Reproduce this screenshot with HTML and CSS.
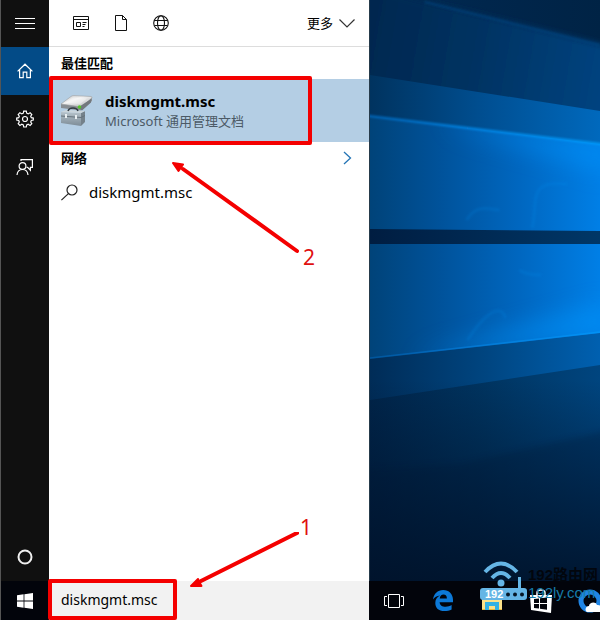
FILE: index.html
```html
<!DOCTYPE html>
<html lang="zh-CN">
<head>
<meta charset="utf-8">
<meta name="viewport" content="width=device-width, initial-scale=1">
<title>diskmgmt.msc</title>
<link rel="stylesheet" href="styles.css">
</head>
<body>
<div class="screen">
  <nav class="rail" aria-label="Cortana">
    <button class="rail-btn" type="button" aria-label="菜单">
      <svg width="20" height="12" viewBox="0 0 20 12"><path d="M0 .5h20M0 5.500h20M0 10.500h20" stroke="#fff" fill="none"/></svg>
    </button>
    <button class="rail-btn rail-btn-active" type="button" aria-label="主页">
      <svg width="16" height="16" viewBox="0 0 16 16" fill="none" stroke="#fff" stroke-width="1.200"><path d="M.6 8.400 8 1.200l7.400 7.200M2.600 6.800v7.800h3.600V9.200h3.600v5.400h3.600V6.800"/></svg>
    </button>
    <button class="rail-btn" type="button" aria-label="设置">
      <svg width="18" height="18" viewBox="-9 -9 18 18" fill="none" stroke="#fff" stroke-width="1.200"><path d="M-1.300-7.800h2.600l.4 2 1.500.7 1.900-1.200 1.700 1.800-1.100 1.700.6 1.500 2 .4v2l-2 .4-.6 1.500 1.100 1.700-1.700 1.800-1.900-1.200-1.500.7-.4 2h-2.600l-.4-2-1.500-.7-1.900 1.200-1.700-1.800 1.100-1.700-.6-1.500-2-.4v-2l2-.4.600-1.500-1.100-1.700 1.700-1.800 1.900 1.200 1.500-.7z"/><circle r="2.500"/></svg>
    </button>
    <button class="rail-btn" type="button" aria-label="反馈">
      <svg width="18" height="18" viewBox="0 0 18 18" fill="none" stroke="#fff" stroke-width="1.200"><path d="M5 3V1.600h11.400v7.800h-2v2.800L11.600 9.400h-1"/><circle cx="6.500" cy="8" r="3.400"/><path d="M1 17c.3-3.500 2.500-5.500 5.500-5.500S11.700 13.500 12 17"/></svg>
    </button>
    <button class="rail-btn rail-btn-last" type="button" aria-label="小娜">
      <svg width="16" height="16" viewBox="0 0 16 16"><circle cx="8" cy="8" r="6.500" fill="none" stroke="#f0f0f0" stroke-width="2"/></svg>
    </button>
  </nav>

  <main class="panel">
    <header class="filters">
      <button class="filter" type="button" aria-label="应用">
        <svg width="16" height="14" viewBox="0 0 16 14" fill="none" stroke="#111"><path d="M.5.500h15v13H.5zM.5 3.500h15M3.500 6.500h4v4h-4zM9.500 6.500h4M9.500 8.500h3M9.500 10.500h2"/></svg>
      </button>
      <button class="filter" type="button" aria-label="文档">
        <svg width="12" height="16" viewBox="0 0 12 16" fill="none" stroke="#111"><path d="M.5.5h7l4 4v11H.5zM7.500.5v4h4"/></svg>
      </button>
      <button class="filter" type="button" aria-label="网页">
        <svg width="16" height="16" viewBox="0 0 16 16" fill="none" stroke="#111" stroke-width="1.100"><circle cx="8" cy="8" r="7.300"/><ellipse cx="8" cy="8" rx="3.500" ry="7.300"/><path d="M1.500 5.500h13M1.500 10.500h13"/></svg>
      </button>
      <button class="more" type="button">更多
        <svg width="16" height="9" viewBox="0 0 16 9" fill="none" stroke="#333" stroke-width="1.200"><path d="M.5.5 8 8 15.500.5"/></svg>
      </button>
    </header>

    <h2 class="heading">最佳匹配</h2>
    <a class="best" href="#">
      <svg class="best-icon" width="34" height="32" viewBox="0 0 34 32">
        <defs>
          <linearGradient id="disk" x1="0" y1="0" x2="1" y2="1"><stop offset="0" stop-color="#c3c5c7"/><stop offset=".4" stop-color="#f1f1f1"/><stop offset="1" stop-color="#b4b6b9"/></linearGradient>
          <linearGradient id="box" x1="0" y1="0" x2="0" y2="1"><stop offset="0" stop-color="#b5c2ca"/><stop offset="1" stop-color="#7d8c97"/></linearGradient>
        </defs>
        <path d="M1 9v4l20 2.500L32 6V2z" fill="#888d92"/>
        <path d="m1 9 10-7.500Q12 .5 14 .6L31 1.500q2 .3.500 1.700L22 12z" fill="url(#disk)" stroke="#9b9da0" stroke-width=".6"/>
        <path d="m5 8 8-5.500 14 1-7 5.500z" fill="#fff" opacity=".35"/>
        <path d="M18 12.500 31 4v3.500l-9 8z" fill="#73787d"/>
        <circle cx="19.500" cy="12" r="1.800" fill="#55c52c"/>
        <path d="m1 17 20 1v13L1 28z" fill="url(#box)"/>
        <path d="m21 18 4-2v11l-4 4z" fill="#74818a"/>
        <path d="m1 17 5-2 19 1-4 2z" fill="#cbd5db"/>
        <path d="M8 16q1-3 5-3t5 3" fill="none" stroke="#343d44" stroke-width="1.500"/>
        <path d="m1 21 20 1.500 4-2" fill="none" stroke="#65727b"/>
        <path d="M6 19v4M16 20v4" stroke="#e9eff2" stroke-width="2"/>
      </svg>
      <span class="best-text">
        <strong class="best-name">diskmgmt.msc</strong>
        <span class="best-kind">Microsoft 通用管理文档</span>
      </span>
      <span class="frame frame-best"></span>
    </a>

    <div class="section">
      <h2 class="heading">网络</h2>
      <svg width="9" height="14" viewBox="0 0 9 14" fill="none" stroke="#2474b5" stroke-width="1.300"><path d="m1 1 6.500 6L1 13"/></svg>
    </div>
    <a class="web" href="#">
      <svg width="17" height="17" viewBox="0 0 17 17" fill="none" stroke="#222" stroke-width="1.200"><circle cx="11" cy="6" r="5"/><path d="m7.400 9.600-7 6.500"/></svg>
      <span>diskmgmt.msc</span>
    </a>

    <div class="note note-two">
      <svg width="140" height="100" viewBox="0 0 140 100"><path d="m11 8 114 82" stroke="#f40000" stroke-width="4" stroke-linecap="round"/><path d="m1 2 10 1.500-2 3-2.500 3.500z" fill="#f40000" stroke="#f40000" stroke-width="2" stroke-linejoin="round"/></svg>
      <span class="digit">2</span>
    </div>
    <div class="note note-one">
      <svg width="112" height="60" viewBox="0 0 112 60"><path d="M12 49 108 1" stroke="#f40000" stroke-width="4" stroke-linecap="round"/><path d="m2 54 7-7 1.500 3.500 2 3.500z" fill="#f40000" stroke="#f40000" stroke-width="2" stroke-linejoin="round"/></svg>
      <span class="digit">1</span>
    </div>
  </main>

  <div class="desktop">
    <svg class="wallpaper" viewBox="0 0 231 581" preserveAspectRatio="none" aria-hidden="true">
      <defs>
        <linearGradient id="sky" x1="0" y1="0" x2="1" y2=".1"><stop offset="0" stop-color="#002c55"/><stop offset=".5" stop-color="#00264c"/><stop offset="1" stop-color="#002345"/></linearGradient>
        <linearGradient id="ray" x1="0" y1="0" x2="1" y2=".1"><stop offset="0" stop-color="#00254b"/><stop offset=".5" stop-color="#003261"/><stop offset="1" stop-color="#00437f"/></linearGradient>
        <linearGradient id="glow" x1="0" y1="0" x2="1" y2="0"><stop offset="0" stop-color="#00335f"/><stop offset=".5" stop-color="#004f92"/><stop offset="1" stop-color="#0069bd"/></linearGradient>
        <linearGradient id="pane" x1="0" y1="0" x2="1" y2="0"><stop offset="0" stop-color="#004379"/><stop offset=".3" stop-color="#00529a"/><stop offset=".65" stop-color="#0067c0"/><stop offset="1" stop-color="#007fe6"/></linearGradient>
        <linearGradient id="edge" x1="0" y1="0" x2="1" y2="0"><stop offset="0" stop-color="#0067bd"/><stop offset=".4" stop-color="#0788e9"/><stop offset="1" stop-color="#05a0ff"/></linearGradient>
        <linearGradient id="bar" x1="0" y1="0" x2="1" y2="0"><stop offset="0" stop-color="#001d41"/><stop offset="1" stop-color="#003767"/></linearGradient>
        <linearGradient id="low" x1="0" y1="0" x2="1" y2="0"><stop offset="0" stop-color="#002c57"/><stop offset=".5" stop-color="#004580"/><stop offset="1" stop-color="#0060b0"/></linearGradient>
        <linearGradient id="floor" x1="0" y1="0" x2="1" y2="0"><stop offset="0" stop-color="#002449"/><stop offset=".5" stop-color="#003460"/><stop offset="1" stop-color="#00457f"/></linearGradient>
        <linearGradient id="shade" x1="0" y1="0" x2="0" y2="1"><stop offset="0" stop-color="#001128" stop-opacity="0"/><stop offset="1" stop-color="#001128" stop-opacity=".85"/></linearGradient>
        <filter id="soft" x="-20%" y="-20%" width="140%" height="140%"><feGaussianBlur stdDeviation="1"/></filter>
        <filter id="wide" x="-20%" y="-20%" width="140%" height="140%"><feGaussianBlur stdDeviation="3"/></filter>
        <filter id="haze" x="-50%" y="-100%" width="200%" height="300%"><feGaussianBlur stdDeviation="12"/></filter>
        <clipPath id="window"><path d="M0 116 231 144V333L0 359z"/></clipPath>
      </defs>
      <path fill="url(#sky)" d="M0 0h231v581H0z"/>
      <path fill="url(#ray)" d="M-20-18 42-2l205 50v90H-20z" filter="url(#wide)"/>
      <path d="m55 2 176 43" stroke="#00569c" stroke-opacity=".4" stroke-width="2" filter="url(#soft)"/>
      <path fill="url(#glow)" d="M0 75 231 111v45H0z"/>
      <path fill="url(#floor)" d="M0 325h231v256H0z"/>
      <path fill="url(#low)" d="M0 325h231v40L0 400z"/>
      <path fill="url(#pane)" d="M0 116 231 144V333L0 359z"/>
      <g clip-path="url(#window)">
        <path d="M70 123 240 144v28z" fill="#0096ff" opacity=".55" filter="url(#haze)"/>
        <path d="m40 358 200-26v-28z" fill="#0098ff" opacity=".6" filter="url(#haze)"/>
        <path d="M163 228c4-18 0-35 10-41 8-5 15-3 25-3M97 220c10-16 21-11 33-10M136 318c-4-15-20-6-38 22M150 270c8 6 16 4 22 5" fill="none" stroke="#1593f0" stroke-opacity=".16" stroke-width="3" filter="url(#soft)"/>
      </g>
      <path d="m-5 115.400 241 29.200" stroke="url(#edge)" stroke-width="2" filter="url(#soft)"/>
      <path d="m0 358 231-26" stroke="url(#edge)" stroke-width="1.500" opacity=".5"/>
      <path fill="url(#bar)" d="m0 229 231 2v13H0z"/>
      <path d="m90 464 151-34v170H-10V470z" fill="#001c3c" opacity=".3" filter="url(#wide)"/>
      <path fill="url(#shade)" d="M0 380h231v201H0z"/>
    </svg>
  </div>

  <footer class="taskbar">
    <button class="start" type="button" aria-label="开始">
      <svg width="16" height="16" viewBox="0 0 16 16" fill="#fff"><path d="m0 2.200 6.600-.9v6.200H0zM7.400 1.200 16 0v7.500H7.400zM0 8.500h6.600v6.200L0 13.800zM7.400 8.500H16V16l-8.600-1.200z"/></svg>
    </button>
    <div class="search">
      <input class="search-input" type="text" value="diskmgmt.msc" aria-label="搜索" spellcheck="false">
      <span class="frame frame-search"></span>
    </div>
    <div class="apps">
      <button class="app" type="button" aria-label="任务视图">
        <svg width="20" height="14" viewBox="0 0 20 14" fill="none" stroke="#fff"><path d="M4.500.5h11v13h-11zM3 2.500H.5v9H3M17 2.500h2.500v9H17"/></svg>
      </button>
      <button class="app" type="button" aria-label="Edge">
        <svg width="20" height="21" viewBox="0 0 20 21"><path d="M0 9.500C.7 4 4.500 0 10.200 0 16 0 20 4.200 20 9.800v2.400H6.600c.2 3 2.700 4.600 6 4.600 2.300 0 4.200-.6 6-1.700v4.300c-2 1.100-4.500 1.600-7.300 1.600-5.700 0-9-3.200-9-8.100 0-3.400 1.700-6 4.800-7.400C3.800 5.900 1.500 7.200 0 9.500zm6.700-1.100h7.200c0-2.500-1.200-3.900-3.400-3.900-2.100 0-3.400 1.500-3.800 3.900z" fill="#0c79d8"/></svg>
      </button>
      <button class="app" type="button" aria-label="文件资源管理器">
        <svg width="22" height="20" viewBox="0 0 22 20"><path d="M1 1h8l2 2h10v16H1z" fill="#e8b83c"/><path d="M1 6h20v12H1z" fill="#fbe18a"/><path d="M4 19v-8h14v8h-4v-4H8v4z" fill="#31b1e5"/></svg>
      </button>
      <button class="app" type="button" aria-label="应用商店">
        <svg width="22" height="24" viewBox="0 0 22 24"><path d="M7 7V4q0-3 4-3t4 3v3" fill="none" stroke="#fff" stroke-width="1.500"/><path d="M0 6h22l-1 18-20-3z" fill="#fff"/><path d="m4 10 5-.6V14H4zM10 9.300l7-.9V14h-7zM4 15h5v4.600l-5-.7zM10 15h7v5.800l-7-1z" fill="#02040b"/></svg>
      </button>
      <button class="app" type="button" aria-label="浏览器">
        <svg width="24" height="24" viewBox="0 0 24 24"><circle cx="12" cy="12" r="9" fill="none" stroke="#2085e5" stroke-width="5"/><path d="M9 23c-3-2-1-6 2-6 0-4 7-5 8-1 4-1 7 5 3 7z" fill="#fff"/></svg>
      </button>
    </div>
  </footer>

  <div class="mark">
    <svg width="48" height="42" viewBox="0 0 48 42" aria-hidden="true">
      <g fill="none" stroke="#65b5e5" stroke-width="4"><path d="M5 12Q21-5 37 12"/><path d="M12 18Q21 8 30 18"/></g>
      <circle cx="21" cy="23" r="3.500" fill="#65b5e5"/>
      <path d="M38 17h3v13h-3z" fill="#65b5e5"/>
      <rect y="28" width="47" height="12" rx="3" fill="#65b5e5"/>
      <g fill="#061625"><circle cx="28" cy="34.500" r="2"/><circle cx="35" cy="34.500" r="2"/><circle cx="42" cy="34.500" r="2"/></g>
      <text class="mark-num" x="5" y="38">192</text>
    </svg>
    <div class="mark-text"><span class="mark-name">192路由网</span><span class="mark-url">192ly.com</span></div>
  </div>
</div>
</body>
</html>
```
FILE: styles.css
```css
* { box-sizing: border-box; }

body {
  margin: 0;
  font-family: "Noto Sans", "Noto Sans CJK SC", sans-serif;
  color: #000;
}

button, input { font: inherit; border: 0; padding: 0; margin: 0; background: none; color: inherit; }
a { color: inherit; text-decoration: none; }
svg { display: block; flex: none; }

.screen {
  position: relative;
  display: grid;
  grid-template-columns: 49px minmax(0, 320px) minmax(0, 1fr);
  grid-template-rows: 1fr auto;
  min-height: 100vh;
  overflow: hidden;
}

.rail {
  display: flex;
  flex-direction: column;
  background: #101010;
  border-left: 1px solid #555;
}
.rail-btn { display: grid; place-items: center; height: 48px; }
.rail-btn:first-child { height: 47px; }
.rail-btn-active { background: #034b87; }
.rail-btn-last { margin-top: auto; }

.panel { position: relative; background: #fff; }

.filters {
  display: flex;
  align-items: center;
  height: 47px;
  padding: 0 14px 0 12px;
  border-bottom: 1px solid #ddd;
}
.filter { display: grid; place-items: center; width: 40px; height: 40px; }
.more { display: flex; align-items: center; gap: 6px; margin-left: auto; font-size: 13px; line-height: 16px; }

.heading { margin: 0; padding: 0 12px; font-size: 13px; line-height: 32px; font-weight: 700; }

.best {
  position: relative;
  display: flex;
  align-items: center;
  gap: 11px;
  height: 63px;
  padding: 0 11px;
  background: #b4cee4;
}
.best-text { display: flex; flex-direction: column; }
.best-name { font-size: 15px; line-height: 20px; }
.best-kind { font-size: 13px; line-height: 20px; color: #4c5a66; }

.frame { position: absolute; border: 4px solid #f40000; border-radius: 2px; pointer-events: none; }
.frame-best { inset: -3px 57px -3px 0; }
.frame-search { top: -2px; bottom: 0; left: -1px; width: 129px; }

.section { display: flex; align-items: center; justify-content: space-between; padding-right: 17px; }
.web { display: flex; align-items: center; gap: 11px; height: 36px; padding: 0 12px; font-size: 15px; }

.note { position: absolute; z-index: 2; pointer-events: none; }
.note-two { left: 123px; top: 161px; }
.note-one { left: 140px; bottom: -11px; }
.digit { position: absolute; font-size: 21px; line-height: 24px; color: #df1010; }
.note-two .digit { left: 131px; top: 84px; }
.note-one .digit { left: 111px; top: -17px; }

.desktop { position: relative; border-left: 1px solid #263b4b; overflow: hidden; }
.wallpaper { position: absolute; inset: 0; width: 100%; height: 100%; }

.taskbar {
  grid-column: 1 / -1;
  display: grid;
  grid-template-columns: subgrid;
  height: 39px;
  background: #02040b;
}
.start { display: grid; place-items: center; border-left: 1px solid #555; }
.search { position: relative; z-index: 1; display: flex; background: #f2f2f2; }
.search-input { width: 100%; padding: 0 12px 2px; font-size: 14px; outline: 0; }
.apps { display: flex; overflow: hidden; }
.app { display: grid; place-items: center; flex: 0 0 49px; }

.mark { position: absolute; right: 2px; bottom: 18px; display: flex; pointer-events: none; }
.mark-num { font: 700 11px "Liberation Sans", sans-serif; fill: #fff; }
.mark-text {
  display: flex;
  flex-direction: column;
  justify-content: flex-end;
  width: 70px;
  white-space: nowrap;
  font-family: "Liberation Sans", "Noto Sans CJK SC", sans-serif;
}
.mark-name { font-size: 15px; line-height: 19px; font-weight: 700; color: #02060d; }
.mark-url { font-size: 15px; line-height: 18px; color: #167ba8; }
```
